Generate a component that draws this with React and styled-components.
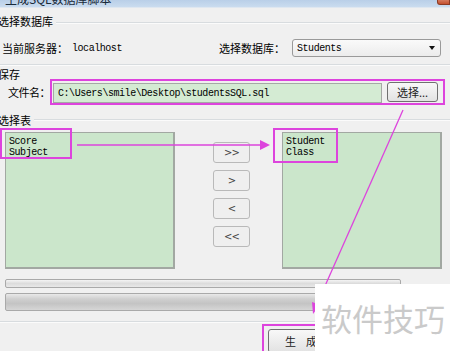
import React from "react";
import styled, { createGlobalStyle } from "styled-components";

const Global = createGlobalStyle`
  html, body { margin: 0; padding: 0; background: #f0f0f0; overflow: hidden; }
  * { box-sizing: border-box; }
`;

const PINK = "#dd44dd";
const CJK = `"Noto Sans CJK SC", "Noto Sans", sans-serif`;
const MONO = `"Liberation Mono", "DejaVu Sans Mono", monospace`;

const Window = styled.div`
  position: relative;
  width: 450px;
  height: 351px;
  overflow: hidden;
  background: #f0f0f0;
  display: flex;
  flex-direction: column;
  font-family: ${CJK};
  font-size: 11px;
  color: #000;
`;

const TitleBar = styled.div`
  height: 8px;
  flex: none;
  overflow: hidden;
  display: flex;
  justify-content: space-between;
  align-items: flex-start;
  background: linear-gradient(#b9cfe8, #cadcef);
  border-bottom: 1px solid #dfe7f0;
`;

const TitleText = styled.div`
  margin: -8px 0 0 5px;
  font-size: 12px;
  line-height: 14px;
  color: #1a2a3a;
  white-space: nowrap;
`;

const CloseBtn = styled.div`
  width: 13px;
  height: 6px;
  margin-top: -1px;
  background: linear-gradient(#d9846a, #c4502e);
  border: 1px solid #8c3a24;
  border-top: none;
  border-radius: 0 0 0 3px;
`;

const GroupHeader = styled.div`
  display: flex;
  align-items: flex-start;
  height: 12px;
  margin-top: ${(p) => p.$top}px;
  margin-left: ${(p) => p.$left || 0}px;
  line-height: 12px;
  white-space: nowrap;
`;

const GroupLine = styled.div`
  flex: 1;
  height: 1px;
  margin-top: ${(p) => p.$off}px;
  margin-left: 3px;
  background: #d8dcdf;
  box-shadow: 0 1px 0 #fbfbfb;
`;

const ServerRow = styled.div`
  display: flex;
  align-items: center;
  height: 18px;
  margin-top: 12px;
  white-space: nowrap;
`;

const Label = styled.span`
  margin-left: ${(p) => p.$left || 0}px;
  width: ${(p) => (p.$w ? `${p.$w}px` : "auto")};
  flex: none;
  white-space: nowrap;
  letter-spacing: ${(p) => p.$ls || 0}px;
`;

const Mono = styled.span`
  font-family: ${MONO};
  font-size: 10px;
  letter-spacing: -0.45px;
`;

const Select = styled.div`
  width: 149px;
  height: 18px;
  margin-left: auto;
  margin-right: 9px;
  display: flex;
  align-items: center;
  padding: 0 5px 0 4px;
  border: 1px solid #9a9a9a;
  border-radius: 3px;
  background: linear-gradient(#fafafa, #ececec);
  font-family: ${MONO};
  font-size: 10px;
  letter-spacing: -0.45px;
`;

const Caret = styled.span`
  margin-left: auto;
  width: 0;
  height: 0;
  border-left: 3.5px solid transparent;
  border-right: 3.5px solid transparent;
  border-top: 4px solid #111;
`;

const Divider = styled.div`
  height: 1px;
  margin-top: ${(p) => p.$top}px;
  background: #d8dcdf;
  box-shadow: 0 1px 0 #fbfbfb;
  flex: none;
`;

const FileRow = styled.div`
  display: flex;
  align-items: center;
  height: 26px;
  margin-top: -1px;
`;

const PinkBox = styled.div`
  border: 2px solid ${PINK};
`;

const FileBox = styled(PinkBox)`
  width: 395px;
  height: 26px;
  display: flex;
  align-items: flex-start;
  padding: 2px 0 0 1px;
  flex: none;
`;

const PathInput = styled.div`
  width: 329px;
  height: 20px;
  display: flex;
  align-items: center;
  padding-left: 4px;
  background: #d4ebd3;
  border: 1px solid #a5a9a5;
  font-family: ${MONO};
  font-size: 10px;
  letter-spacing: -0.45px;
  white-space: nowrap;
`;

const Btn = styled.div`
  width: ${(p) => p.$w}px;
  height: ${(p) => p.$h}px;
  margin-left: ${(p) => p.$left || 0}px;
  margin-top: ${(p) => p.$top || 0}px;
  display: flex;
  align-items: center;
  justify-content: ${(p) => (p.$start ? "flex-start" : "center")};
  border: 1px solid ${(p) => (p.$dark ? "#707070" : "#b9b9b9")};
  border-radius: 3px;
  background: ${(p) => (p.$grad ? "linear-gradient(#f8f8f8, #e2e2e2)" : "#efefef")};
  font-size: 11px;
  color: #222;
  white-space: nowrap;
  flex: none;
`;

const ArrowText = styled.span`
  font-family: "DejaVu Sans", sans-serif;
  font-size: 10px;
  color: #444;
  letter-spacing: -1px;
`;

const ListsRow = styled.div`
  display: flex;
  align-items: flex-start;
  margin-top: 6px;
  height: 137px;
`;

const ListBox = styled.div`
  position: relative;
  width: ${(p) => p.$w}px;
  height: 137px;
  margin-left: ${(p) => p.$left}px;
  padding: 3px 0 0 3px;
  background: #cbe6cb;
  border: 1px solid #a2a8a2;
  border-right-width: 2px;
  border-bottom-width: 2px;
  font-family: ${MONO};
  font-size: 10px;
  letter-spacing: -0.45px;
  line-height: 11px;
  flex: none;
`;

const Mark = styled(PinkBox)`
  position: absolute;
  left: ${(p) => p.$x}px;
  top: ${(p) => p.$y}px;
  width: ${(p) => p.$w}px;
  height: ${(p) => p.$h}px;
`;

const BtnColumn = styled.div`
  display: flex;
  flex-direction: column;
  gap: 7px;
  padding-top: 10px;
  margin-left: 38px;
`;

const Progress = styled.div`
  width: ${(p) => p.$w}px;
  height: ${(p) => p.$h}px;
  margin-top: ${(p) => p.$top}px;
  margin-left: 5px;
  border: 1px solid #a9a9a9;
  border-radius: 2px;
  background: ${(p) =>
    p.$thick
      ? "linear-gradient(#e9e9e9, #d0d0d0 30%, #c4c4c4 60%, #d6d6d6)"
      : "linear-gradient(#f4f4f4, #dcdcdc 50%, #e8e8e8)"};
  flex: none;
`;

const BottomRow = styled.div`
  display: flex;
  margin-top: 2px;
`;

const GenBox = styled(PinkBox)`
  margin-left: 262px;
  width: 150px;
  height: 40px;
  padding: 3px 0 0 4px;
`;

const GenText = styled.span`
  letter-spacing: 10px;
  margin-left: 16px;
`;

const Watermark = styled.div`
  position: absolute;
  right: 0;
  bottom: 0;
  width: 135px;
  height: 67px;
  background: #fff;
  display: flex;
  align-items: center;
  padding-left: 6px;
  font-family: ${CJK};
  font-size: 31px;
  color: #cacaca;
  white-space: nowrap;
`;

const Overlay = styled.svg`
  position: absolute;
  left: 0;
  top: 0;
  pointer-events: none;
`;

export default function App() {
  return (
    <>
      <Global />
      <Window>
        <TitleBar>
          <TitleText>生成SQL数据库脚本</TitleText>
          <CloseBtn />
        </TitleBar>

        <GroupHeader $top={7} $left={-2}>
          选择数据库
          <GroupLine $off={7} />
        </GroupHeader>

        <ServerRow>
          <Label $left={2} $w={70}>当前服务器：</Label>
          <Mono>localhost</Mono>
          <Label $left={97}>选择数据库：</Label>
          <Select>
            Students
            <Caret />
          </Select>
        </ServerRow>

        <Divider $top={7} />

        <GroupHeader $top={3} $left={-2}>
          保存
        </GroupHeader>

        <FileRow>
          <Label $left={8} $w={42} $ls={-0.5}>文件名：</Label>
          <FileBox>
            <PathInput>C:\Users\smile\Desktop\studentsSQL.sql</PathInput>
            <Btn $w={51} $h={20} $left={5} $top={-1} $grad $dark>
              选择...
            </Btn>
          </FileBox>
        </FileRow>

        <GroupHeader $top={9} $left={-2}>
          选择表
          <GroupLine $off={5} />
        </GroupHeader>

        <ListsRow>
          <ListBox $w={170} $left={5}>
            <div>Score</div>
            <div>Subject</div>
            <Mark $x={-6} $y={-5} $w={72} $h={31} />
          </ListBox>
          <BtnColumn>
            <Btn $w={37} $h={21}><ArrowText>&gt;&gt;</ArrowText></Btn>
            <Btn $w={37} $h={21}><ArrowText>&gt;</ArrowText></Btn>
            <Btn $w={37} $h={21}><ArrowText>&lt;</ArrowText></Btn>
            <Btn $w={37} $h={21}><ArrowText>&lt;&lt;</ArrowText></Btn>
          </BtnColumn>
          <ListBox $w={160} $left={32}>
            <div>Student</div>
            <div>Class</div>
            <Mark $x={-10} $y={-5} $w={65} $h={35} />
          </ListBox>
        </ListsRow>

        <Progress $w={396} $h={9} $top={10} />
        <Progress $w={436} $h={18} $top={5} $thick />

        <Divider $top={10} />

        <BottomRow>
          <GenBox>
            <Btn $w={80} $h={24} $grad $dark $start>
              <GenText>生成</GenText>
            </Btn>
          </GenBox>
        </BottomRow>

        <Overlay width="450" height="351" viewBox="0 0 450 351">
          <line x1="77" y1="145" x2="262" y2="145" stroke={PINK} strokeWidth="1.5" />
          <polygon points="260,140 270,145 260,150" fill={PINK} />
          <line x1="403" y1="110" x2="317" y2="304" stroke={PINK} strokeWidth="1.3" />
          <polygon points="312,302 320,305 313,314" fill={PINK} />
        </Overlay>

        <Watermark>软件技巧</Watermark>
      </Window>
    </>
  );
}
